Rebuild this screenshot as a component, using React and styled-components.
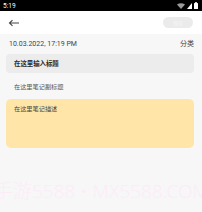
import React from "react";
import styled, { createGlobalStyle } from "styled-components";

const Global = createGlobalStyle`
  html, body { margin: 0; padding: 0; }
  body {
    width: 202px; height: 212px; overflow: hidden;
    background: #f7f7f7;
    font-family: "Noto Sans", "Noto Sans CJK SC", sans-serif;
  }
`;

const Page = styled.div`
  position: relative;
  width: 202px;
  height: 212px;
  overflow: hidden;
  background: #f7f7f7;
`;

const StatusBar = styled.div`
  height: 11px;
  background: #000;
  display: flex;
  align-items: center;
  justify-content: space-between;
  padding: 0 4px 0 3px;
  color: #fff;
  font-size: 6.5px;
  font-family: "Roboto", sans-serif;
`;

const StatusIcons = styled.div`
  display: flex;
  align-items: center;
  gap: 2px;
`;

const Header = styled.div`
  height: 23px;
  background: #fff;
  display: flex;
  align-items: center;
  justify-content: space-between;
  padding: 0 9px 0 8px;
`;

const SaveButton = styled.div`
  width: 30px;
  height: 11px;
  border-radius: 6px;
  background: #ebebeb;
  color: #f8f8f8;
  font-size: 5px;
  display: flex;
  align-items: center;
  justify-content: center;
  font-family: "Noto Sans CJK SC", sans-serif;
`;

const Content = styled.div`
  display: flex;
  flex-direction: column;
  padding: 4px 8px 0 6px;
`;

const MetaRow = styled.div`
  display: flex;
  justify-content: space-between;
  align-items: baseline;
  height: 13px;
  line-height: 13px;
  padding-left: 3px;
  font-size: 7px;
  color: #444;
  font-family: "Roboto", "Noto Sans CJK SC", sans-serif;
`;

const TitleBox = styled.div`
  margin-top: 3px;
  height: 19px;
  border-radius: 4px;
  background: #ececec;
  display: flex;
  align-items: center;
  padding-left: 8px;
  font-size: 6.4px;
  color: #2a2a2a;
  font-weight: 700;
  font-family: "Noto Sans CJK SC", sans-serif;
`;

const SubTitle = styled.div`
  height: 26px;
  display: flex;
  align-items: center;
  padding-left: 8px;
  font-size: 6.2px;
  color: #555;
  font-family: "Noto Sans CJK SC", sans-serif;
`;

const NoteBox = styled.div`
  height: 49px;
  border-radius: 5px;
  background: #ffe6a8;
  padding: 5px 8px;
  box-sizing: border-box;
  font-size: 6.2px;
  color: #444;
  font-family: "Noto Sans CJK SC", sans-serif;
`;

const Watermark = styled.div`
  position: absolute;
  left: -6px;
  top: 176px;
  white-space: nowrap;
  font-size: 19px;
  font-weight: 300;
  color: #fdecf7;
  pointer-events: none;
  font-family: "Noto Sans", "Noto Sans CJK SC", sans-serif;
`;

export default function App() {
  return (
    <Page>
      <Global />
      <StatusBar>
        <span>5:19</span>
        <StatusIcons>
          <svg width="8" height="6" viewBox="0 0 8 6">
            <path d="M0 1.5 Q4 -1 8 1.5 L4 6 Z" fill="#9a9a9a" />
          </svg>
          <svg width="5" height="6" viewBox="0 0 5 6">
            <path d="M5 0 L5 6 L0 6 Z" fill="#fff" />
          </svg>
          <svg width="4" height="7" viewBox="0 0 4 7">
            <rect x="1.2" y="0" width="1.6" height="1" fill="#fff" />
            <rect x="0" y="1" width="4" height="6" rx="0.5" fill="#fff" />
          </svg>
        </StatusIcons>
      </StatusBar>
      <Header>
        <svg width="12" height="8" viewBox="0 0 12 8">
          <path d="M11 4 H2 M4.5 1.2 L1.5 4 L4.5 6.8" stroke="#444" strokeWidth="1.1" fill="none" />
        </svg>
        <SaveButton>保存</SaveButton>
      </Header>
      <Content>
        <MetaRow>
          <span>10.03.2022, 17:19 PM</span>
          <span>分类</span>
        </MetaRow>
        <TitleBox>在这里输入标题</TitleBox>
        <SubTitle>在这里笔记副标题</SubTitle>
        <NoteBox>在这里笔记描述</NoteBox>
      </Content>
      <Watermark>手游5588 • MX5588.COM</Watermark>
    </Page>
  );
}
